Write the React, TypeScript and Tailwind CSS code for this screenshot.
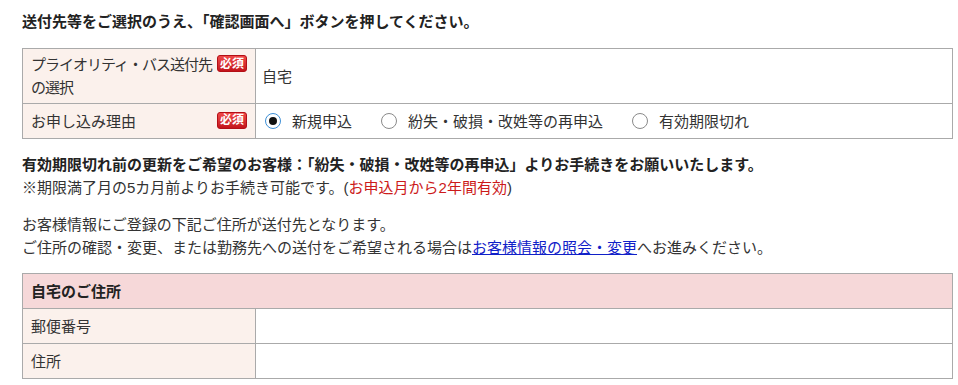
import React from 'react';

const font = { fontFamily: '"Liberation Sans", "Noto Sans CJK JP", sans-serif' };

function Required() {
  return (
    <span className="shrink-0 mt-[2px] inline-flex items-center justify-center w-[30px] h-[17px] rounded-[3px] border border-[#b30f16] bg-gradient-to-b from-[#f04848] to-[#c3121b] text-white text-[12px] leading-none font-bold">
      必須
    </span>
  );
}

function Radio({ label, checked }: { label: string; checked?: boolean }) {
  return (
    <label className="flex items-center ml-[3px] mr-[26px]">
      {checked ? (
        <span className="w-4 h-4 rounded-full border-[1.5px] border-[#3d8fd6] flex items-center justify-center">
          <span className="w-[8px] h-[8px] rounded-full bg-[#111]" />
        </span>
      ) : (
        <span className="w-4 h-4 rounded-full border border-[#8a8a8a] bg-white" />
      )}
      <span className="ml-[11px]">{label}</span>
    </label>
  );
}

const th = 'w-[233px] bg-[#fbf1ec] border border-[#aaaaaa] px-2 py-1 h-[35px] align-middle text-left font-normal';
const td = 'border border-[#aaaaaa] px-[6px] py-1 h-[35px] align-middle';

export default function App() {
  return (
    <div style={font} className="w-[958px] h-[385px] bg-white text-[15px] leading-[23px] text-[#333] px-[22px] pt-[10px] overflow-hidden">
      <h1 className="font-bold text-[#222] text-[15px]">送付先等をご選択のうえ、「確認画面へ」ボタンを押してください。</h1>

      <table className="mt-[15px] w-[931px] border-collapse">
        <tbody>
          <tr>
            <th className={th}>
              <div className="flex items-start">
                <span className="flex-1 whitespace-nowrap tracking-[-1px]">プライオリティ・バス送付先<br />の選択</span>
                <Required />
              </div>
            </th>
            <td className={td}>自宅</td>
          </tr>
          <tr>
            <th className={th}>
              <div className="flex items-start">
                <span className="flex-1">お申し込み理由</span>
                <Required />
              </div>
            </th>
            <td className={td}>
              <div className="flex items-center">
                <Radio label="新規申込" checked />
                <Radio label="紛失・破損・改姓等の再申込" />
                <Radio label="有効期限切れ" />
              </div>
            </td>
          </tr>
        </tbody>
      </table>

      <div className="mt-[14px]">
        <p className="font-bold text-[#222]">有効期限切れ前の更新をご希望のお客様：「紛失・破損・改姓等の再申込」よりお手続きをお願いいたします。</p>
        <p>※期限満了月の5カ月前よりお手続き可能です。(<span className="text-[#cc1a1a]">お申込月から2年間有効</span>)</p>
      </div>

      <div className="mt-[14px]">
        <p>お客様情報にご登録の下記ご住所が送付先となります。</p>
        <p>
          ご住所の確認・変更、または勤務先への送付をご希望される場合は
          <a href="#" className="text-[#1020c8] underline">お客様情報の照会・変更</a>
          へお進みください。
        </p>
      </div>

      <table className="mt-[14px] w-[931px] border-collapse">
        <tbody>
          <tr>
            <th colSpan={2} className="bg-[#f6d8d9] border border-[#aaaaaa] px-2 py-1 h-[35px] text-left font-bold text-[#222]">自宅のご住所</th>
          </tr>
          <tr>
            <th className={th + ' h-[34px]'}>郵便番号</th>
            <td className={td + ' h-[34px]'}></td>
          </tr>
          <tr>
            <th className={th + ' h-[34px]'}>住所</th>
            <td className={td + ' h-[34px]'}></td>
          </tr>
        </tbody>
      </table>
    </div>
  );
}
